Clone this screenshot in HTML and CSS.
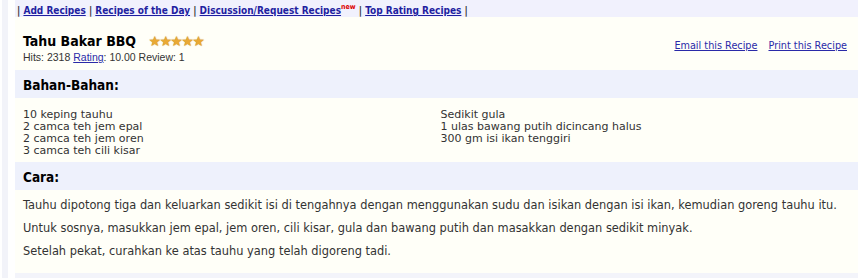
FILE: index.html
```html
<!DOCTYPE html>
<html lang="ms">
<head>
  <meta charset="UTF-8" />
  <title>Tahu Bakar BBQ</title>
  <link rel="stylesheet" href="styles.css">
</head>
<body>
  <div class="rail"></div>

  <div class="main">
    <div class="nav">
      | <a href="#">Add Recipes</a>
      | <a href="#">Recipes of the Day</a>
      | <a href="#">Discussion/Request Recipes</a><sup class="new">new</sup>
      | <a href="#">Top Rating Recipes</a> |
    </div>

    <div class="title-box">
      <div class="title-left">
        <h1>Tahu Bakar BBQ <span class="stars">&#9733;&#9733;&#9733;&#9733;&#9733;</span></h1>
        <div class="meta">Hits: 2318 <a href="#">Rating</a>: 10.00 Review: 1</div>
      </div>
      <div class="actions">
        <a href="#">Email this Recipe</a>
        <a href="#">Print this Recipe</a>
      </div>
    </div>

    <h2 class="band">Bahan-Bahan:</h2>
    <div class="ingredients">
      <div class="col">
        10 keping tauhu<br>
        2 camca teh jem epal<br>
        2 camca teh jem oren<br>
        3 camca teh cili kisar
      </div>
      <div class="col">
        Sedikit gula<br>
        1 ulas bawang putih dicincang halus<br>
        300 gm isi ikan tenggiri
      </div>
    </div>

    <h2 class="band">Cara:</h2>
    <div class="steps">
      <p>Tauhu dipotong tiga dan keluarkan sedikit isi di tengahnya dengan menggunakan sudu dan isikan dengan isi ikan, kemudian goreng tauhu itu.</p>
      <p>Untuk sosnya, masukkan jem epal, jem oren, cili kisar, gula dan bawang putih dan masakkan dengan sedikit minyak.</p>
      <p>Setelah pekat, curahkan ke atas tauhu yang telah digoreng tadi.</p>
    </div>
    <div class="foot"></div>
  </div>
</body>
</html>
```

FILE: styles.css
```css
body {
  margin: 0;
  display: flex;
  background: #fff;
  font-family: "DejaVu Sans", Verdana, sans-serif;
  color: #222;
}

/* thin strip on the far left */
.rail {
  flex: none;
  width: 6px;
  margin-left: 2px;
  background: #f2f3f9;
}

.main {
  flex: 1;
  min-width: 0;
  margin: 0 3px 0 7px;
}

a {
  color: #2a2aa8;
}

/* Top nav */
.nav {
  height: 17px;
  padding-left: 2px;
  background: #f1f1fd;
  font-family: "DejaVu Sans Condensed", "DejaVu Sans", sans-serif;
  font-size: 10px;
  font-weight: bold;
  line-height: 21px;
  color: #333;
  white-space: nowrap;
}
.nav a {
  color: #1f1fa0;
}
.nav .new {
  color: #d00;
  font-size: 7px;
  vertical-align: 5px;
  line-height: 0;
}

/* Title */
.title-box {
  height: 53px;
  display: flex;
  justify-content: space-between;
  align-items: flex-start;
  background: #fffff8;
  padding: 0 11px 0 8px;
}
.title-box h1 {
  margin: 16px 0 0 0;
  font-family: "DejaVu Sans Condensed", "DejaVu Sans", sans-serif;
  font-size: 14px;
  font-weight: bold;
  color: #000;
  line-height: 17px;
}
.stars {
  margin-left: 8px;
  font-family: "DejaVu Sans", sans-serif;
  color: #e9a935;
  font-size: 14px;
  font-weight: normal;
  letter-spacing: -1.6px;
  text-shadow: 0 0 1px #b97a10;
}
.meta {
  font-family: "Liberation Sans", Arial, sans-serif;
  font-size: 10.5px;
  color: #333;
  margin-top: 1px;
}
.actions {
  margin-top: 23px;
  display: flex;
  gap: 11px;
  font-size: 9.7px;
}

/* Section header bands */
.band {
  margin: 0;
  height: 28px;
  padding-left: 8px;
  background: #eef1fc;
  font-family: "DejaVu Sans Condensed", "DejaVu Sans", sans-serif;
  font-size: 13.5px;
  font-weight: bold;
  line-height: 30px;
  color: #000;
}

.ingredients {
  height: 64px;
  display: flex;
  background: #fffff8;
  padding: 11px 0 0 8px;
  box-sizing: border-box;
  font-size: 11px;
  line-height: 12px;
  color: #333;
}
.ingredients .col {
  width: 426px;
}

.steps {
  height: 83px;
  background: #fffff8;
  padding: 4px 0 0 8px;
  box-sizing: border-box;
  font-size: 11.4px;
  color: #333;
}
.steps p {
  margin: 0;
  line-height: 23px;
}

.foot {
  height: 5px;
  background: #f3f4fa;
}
```
